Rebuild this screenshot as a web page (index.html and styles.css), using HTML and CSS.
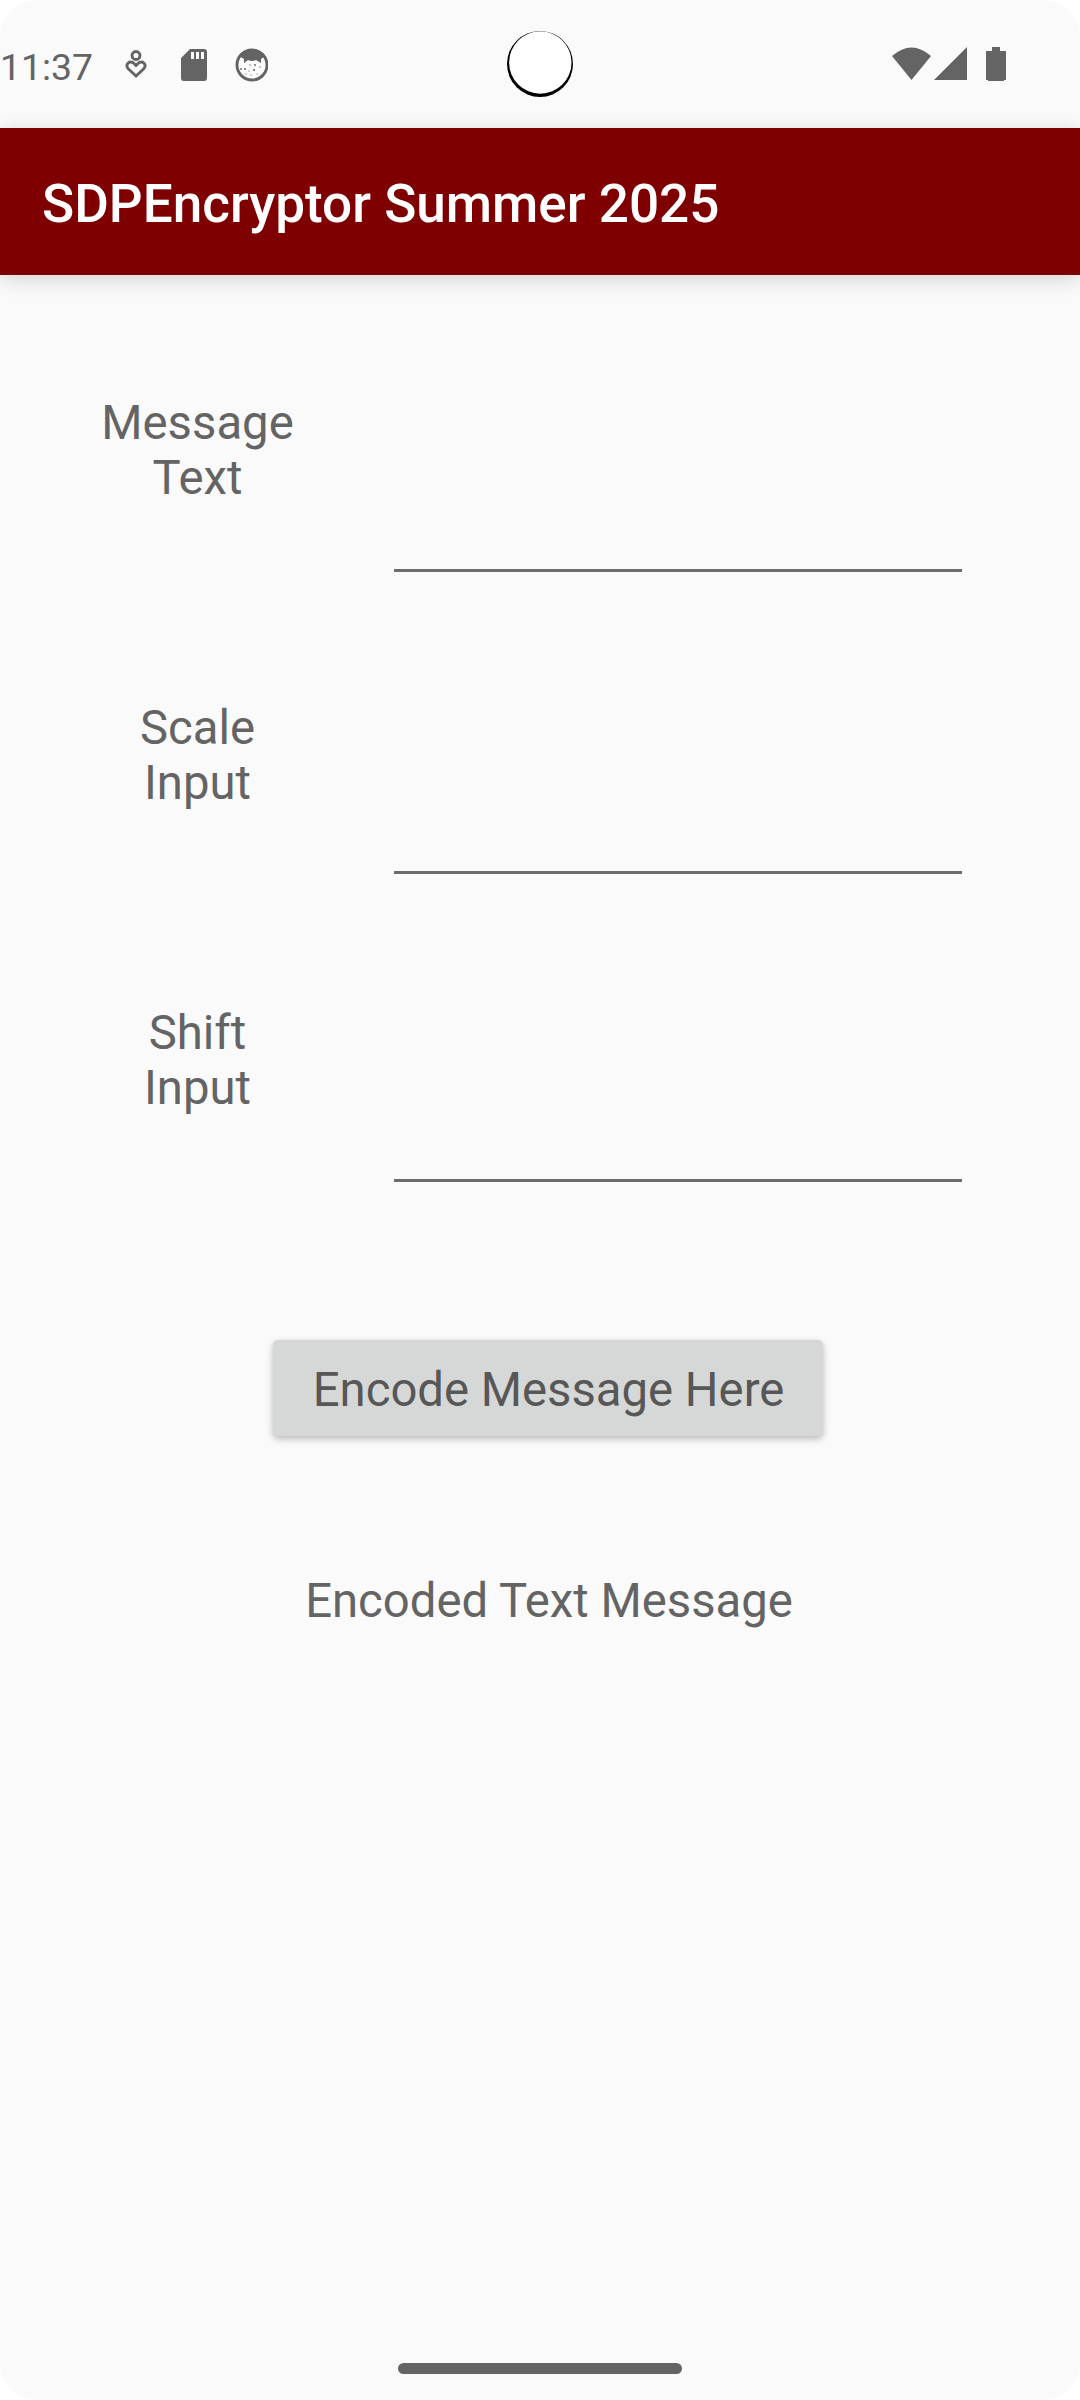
FILE: index.html
```html
<!DOCTYPE html>
<html lang="en">
<head>
<meta charset="utf-8">
<title>SDPEncryptor Summer 2025</title>
<link rel="stylesheet" href="styles.css">
</head>
<body>
<div class="screen">
  <div class="status">
    <span class="clock">11:37</span>
    <svg class="notifications" width="144" height="36" viewBox="0 0 144 36">
      <g fill="none" stroke="#646464" stroke-width="2.9">
        <circle cx="12" cy="7.500" r="4"/>
        <path d="M12 28L4.500 21C0 16.500 6 11.500 10 15.500L12 17.500L14 15.500C18 11.500 24 16.500 19.500 21Z"/>
        <circle cx="128" cy="17" r="15"/>
      </g>
      <path fill="#646464" fill-rule="evenodd" d="M66 1H80Q83 1 83 4V30Q83 33 80 33H60Q57 33 57 30V10ZM67 4V11H70V4ZM72 4V11H75V4ZM77 4V11H80V4Z"/>
      <path fill="#646464" d="M115 8Q128-4 141 8L137 11L137 15L132 12Q128 14 124 12L120 15L120 11Z"/>
      <g fill="#646464"><circle cx="117" cy="21" r=".9"/><circle cx="121" cy="21" r="1"/><circle cx="126" cy="17" r=".7"/><circle cx="131" cy="17" r=".9"/><circle cx="136" cy="19" r=".7"/><circle cx="130" cy="22" r="1.100"/><circle cx="125" cy="23" r=".6"/><circle cx="122" cy="26" r=".6"/><circle cx="127" cy="27" r=".6"/><circle cx="133" cy="26" r=".6"/></g>
    </svg>
    <svg class="camera" width="66" height="66" viewBox="0 0 66 66"><circle cx="33" cy="33" r="33"/><circle cx="33.300" cy="31.500" r="31.200" fill="#fff"/></svg>
    <svg class="system" width="116" height="36" viewBox="0 0 116 36" fill="#646464">
      <path d="M0 9Q19.500-8 39 9L19.500 33Z"/><path d="M42 33L75 0V33Z"/><path d="M100 0H108V4H114V33H112V34H96V33H94V4H100Z"/>
    </svg>
  </div>
  <header class="app-bar"><h1>SDPEncryptor Summer 2025</h1></header>
  <main>
    <div class="row"><label for="message">Message<br>Text</label><input id="message"></div>
    <div class="row scale"><label for="scale">Scale<br>Input</label><input id="scale"></div>
    <div class="row shift"><label for="shift">Shift<br>Input</label><input id="shift"></div>
    <button>Encode Message Here</button>
    <p>Encoded Text Message</p>
  </main>
  <div class="handle"></div>
</div>
</body>
</html>
```
FILE: styles.css
```css
* { box-sizing: border-box; }
body { margin: 0; background: #fff; font-family: Roboto, sans-serif; color: #646464; }
.screen { height: 2400px; display: flex; flex-direction: column; background: #fafafa; border-radius: 36px; overflow: hidden; }
.status { height: 128px; display: grid; grid-template-columns: 124px 383px 384px 189px; align-items: start; }
.clock { padding-top: 45px; font-size: 37.300px; line-height: 44px; }
.notifications { margin-top: 48px; }
.camera { margin-top: 31px; }
.system { margin-top: 47px; margin-left: 1px; }
.app-bar { height: 147px; padding: 5px 0 0 42px; display: flex; align-items: center; background: #7f0000; color: #fff; box-shadow: 0 4px 20px rgba(0,0,0,.16); }
h1 { margin: 0; font-size: 53.100px; font-weight: 500; line-height: 62px; }
main { flex: 1; display: flex; flex-direction: column; align-items: center; font-size: 47.250px; line-height: 55.300px; }
.row { width: 100%; height: 305px; display: grid; grid-template-columns: 394px 568px; }
label { padding: 121px 0 0 1px; text-align: center; }
input { height: 297px; padding: 0; border: 0; border-bottom: 3px solid #6c6c6c; background: transparent; font: inherit; outline: 0; }
.scale input { height: 294px; }
.shift input { height: 297px; }
button { width: 550px; height: 96px; margin: 150px 0 0 16px; padding: 5px 0 0 1px; border: 0; border-radius: 5px; background: #d6d8d7; color: #575757; font: inherit; box-shadow: 0 3px 7px rgba(0,0,0,.26); }
p { margin: 138px 0 0 18px; }
.handle { width: 284px; height: 11px; margin: 0 auto 26px; border-radius: 6px; background: #646464; }
```
